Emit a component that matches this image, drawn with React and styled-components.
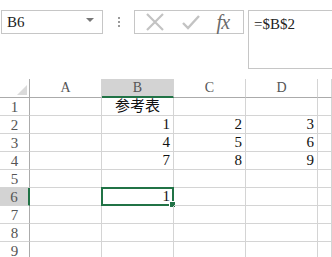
import React from 'react';
import styled, { createGlobalStyle } from 'styled-components';

const GlobalStyle = createGlobalStyle`
  html, body {
    margin: 0;
    padding: 0;
    background: #fff;
  }
`;

const Sheet = styled.div`
  width: 332px;
  height: 257px;
  overflow: hidden;
  background: #fff;
  font-family: "Liberation Serif", "Noto Sans CJK SC", serif;
  color: #000;
`;

const FormulaBar = styled.div`
  display: flex;
  align-items: flex-start;
  padding: 10px 0 0 1px;
  height: 69px;
  box-sizing: border-box;
`;

const NameBox = styled.div`
  width: 102px;
  height: 24px;
  box-sizing: border-box;
  border: 1px solid #c6c6c6;
  display: flex;
  align-items: center;
  justify-content: space-between;
  padding: 0 8px 0 5px;
  font-size: 15px;
  color: #222;
`;

const Caret = styled.span`
  width: 0;
  height: 0;
  border-left: 4px solid transparent;
  border-right: 4px solid transparent;
  border-top: 4px solid #777;
  margin-bottom: 4px;
`;

const Grip = styled.div`
  width: 31px;
  height: 24px;
  display: flex;
  justify-content: center;
  align-items: center;
`;

const Dots = styled.div`
  width: 2px;
  height: 11px;
  background: repeating-linear-gradient(#9a9a9a 0 2px, transparent 2px 4px);
`;

const Buttons = styled.div`
  width: 110px;
  height: 24px;
  box-sizing: border-box;
  border: 1px solid #c6c6c6;
  display: flex;
  align-items: center;
  justify-content: space-around;
  padding: 0 6px 0 2px;
`;

const Fx = styled.span`
  font-family: "Liberation Serif", serif;
  font-style: italic;
  font-size: 20px;
  color: #6a6a6a;
  letter-spacing: -1px;
`;

const Input = styled.div`
  margin-left: 4px;
  flex: 1;
  height: 59px;
  box-sizing: border-box;
  border: 1px solid #c6c6c6;
  border-right: none;
  padding: 5px 0 0 5px;
  font-size: 15px;
  color: #222;
`;

const Grid = styled.div`
  display: grid;
  grid-template-columns: 30px 72px 72px 72px 72px 1fr;
  grid-auto-rows: 18px;
  grid-template-rows: 19px;
  margin-top: 10px;
`;

const Cell = styled.div`
  position: relative;
  box-sizing: border-box;
  border-right: 1px solid #d4d4d4;
  border-bottom: 1px solid #d4d4d4;
  font-size: 15px;
  line-height: 17px;
  padding: 0 3px;
  color: #111;
  text-align: ${(p) => (p.$center ? 'center' : 'right')};
  white-space: nowrap;
`;

const ColHead = styled.div`
  box-sizing: border-box;
  border-right: 1px solid #d4d4d4;
  border-bottom: 1px solid ${(p) => (p.$active ? '#217346' : '#ababab')};
  border-bottom-width: ${(p) => (p.$active ? '2px' : '1px')};
  background: ${(p) => (p.$active ? '#d3d3d3' : '#fff')};
  text-align: center;
  font-size: 14px;
  line-height: 18px;
  color: #555;
`;

const Corner = styled(ColHead)`
  border-right-color: #ababab;
  display: flex;
  align-items: flex-end;
  justify-content: flex-end;
  padding: 0 2px 2px 0;
`;

const RowHead = styled.div`
  box-sizing: border-box;
  border-bottom: 1px solid #d4d4d4;
  border-right: ${(p) => (p.$active ? '2px solid #217346' : '1px solid #ababab')};
  background: ${(p) => (p.$active ? '#d3d3d3' : '#fff')};
  text-align: center;
  font-size: 15px;
  line-height: 18px;
  color: #555;
`;

const Selection = styled.div`
  position: absolute;
  left: -1px;
  top: -1px;
  right: -1px;
  bottom: -1px;
  border: 2px solid #217346;
  pointer-events: none;

  &::after {
    content: '';
    position: absolute;
    right: -4px;
    bottom: -4px;
    width: 5px;
    height: 5px;
    background: #217346;
    border: 1px solid #fff;
  }
`;

const data = [
  ['', '参考表', '', '', ''],
  ['', '1', '2', '3', ''],
  ['', '4', '5', '6', ''],
  ['', '7', '8', '9', ''],
  ['', '', '', '', ''],
  ['', '1', '', '', ''],
  ['', '', '', '', ''],
  ['', '', '', '', ''],
  ['', '', '', '', ''],
];

export default function App() {
  return (
    <Sheet>
      <GlobalStyle />
      <FormulaBar>
        <NameBox>
          B6
          <Caret />
        </NameBox>
        <Grip>
          <Dots />
        </Grip>
        <Buttons>
          <svg width="20" height="20" viewBox="0 0 20 20">
            <path d="M2 2 L18 18 M18 2 L2 18" stroke="#c3c3c3" strokeWidth="2.2" fill="none" />
          </svg>
          <svg width="20" height="18" viewBox="0 0 20 18">
            <path d="M2 10 L7 15 L18 3" stroke="#c3c3c3" strokeWidth="2.4" fill="none" />
          </svg>
          <Fx>fx</Fx>
        </Buttons>
        <Input>=$B$2</Input>
      </FormulaBar>
      <Grid>
        <Corner>
          <svg width="10" height="10" viewBox="0 0 10 10">
            <polygon points="10,0 10,10 0,10" fill="#dadada" />
          </svg>
        </Corner>
        {['A', 'B', 'C', 'D', ''].map((c) => (
          <ColHead key={c || 'E'} $active={c === 'B'}>
            {c}
          </ColHead>
        ))}
        {data.map((row, r) => (
          <React.Fragment key={r}>
            <RowHead $active={r === 5}>{r + 1}</RowHead>
            {row.map((v, c) => (
              <Cell key={c} $center={r === 0}>
                {v}
                {r === 5 && c === 1 && <Selection />}
              </Cell>
            ))}
          </React.Fragment>
        ))}
      </Grid>
    </Sheet>
  );
}
